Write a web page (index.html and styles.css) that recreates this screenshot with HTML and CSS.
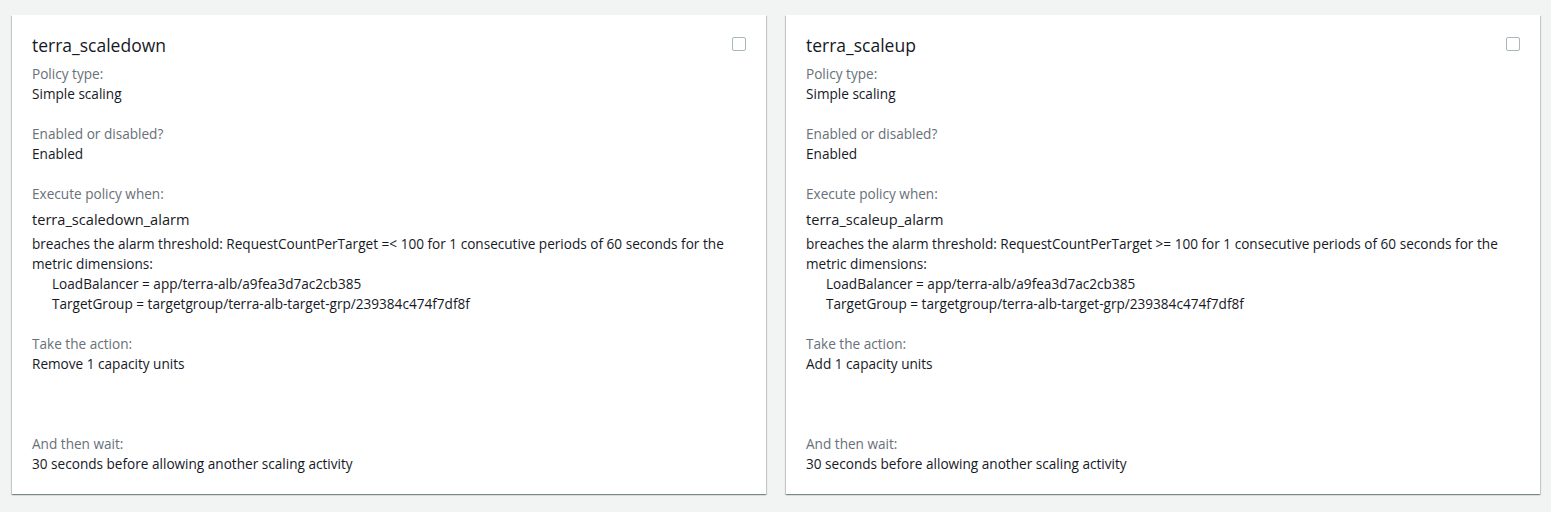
FILE: index.html
```html
<!DOCTYPE html>
<html>
<head>
<meta charset="utf-8">
<link rel="stylesheet" href="styles.css">
</head>
<body>
<div class="grid">
  <div class="card">
    <div class="card-head">
      <h2 class="title">terra_scaledown</h2>
      <span class="checkbox"></span>
    </div>
    <div class="field">
      <div class="label">Policy type:</div>
      <div class="value">Simple scaling</div>
    </div>
    <div class="field">
      <div class="label">Enabled or disabled?</div>
      <div class="value">Enabled</div>
    </div>
    <div class="field">
      <div class="label">Execute policy when:</div>
      <div class="alarm">terra_scaledown_alarm</div>
      <div class="value">breaches the alarm threshold: RequestCountPerTarget =&lt; 100 for 1 consecutive periods of 60 seconds for the metric dimensions:</div>
      <div class="value dim">LoadBalancer = app/terra-alb/a9fea3d7ac2cb385</div>
      <div class="value dim">TargetGroup = targetgroup/terra-alb-target-grp/239384c474f7df8f</div>
    </div>
    <div class="field">
      <div class="label">Take the action:</div>
      <div class="value">Remove 1 capacity units</div>
    </div>
    <div class="field last">
      <div class="label">And then wait:</div>
      <div class="value">30 seconds before allowing another scaling activity</div>
    </div>
  </div>
  <div class="card">
    <div class="card-head">
      <h2 class="title">terra_scaleup</h2>
      <span class="checkbox"></span>
    </div>
    <div class="field">
      <div class="label">Policy type:</div>
      <div class="value">Simple scaling</div>
    </div>
    <div class="field">
      <div class="label">Enabled or disabled?</div>
      <div class="value">Enabled</div>
    </div>
    <div class="field">
      <div class="label">Execute policy when:</div>
      <div class="alarm">terra_scaleup_alarm</div>
      <div class="value">breaches the alarm threshold: RequestCountPerTarget &gt;= 100 for 1 consecutive periods of 60 seconds for the metric dimensions:</div>
      <div class="value dim">LoadBalancer = app/terra-alb/a9fea3d7ac2cb385</div>
      <div class="value dim">TargetGroup = targetgroup/terra-alb-target-grp/239384c474f7df8f</div>
    </div>
    <div class="field">
      <div class="label">Take the action:</div>
      <div class="value">Add 1 capacity units</div>
    </div>
    <div class="field last">
      <div class="label">And then wait:</div>
      <div class="value">30 seconds before allowing another scaling activity</div>
    </div>
  </div>
</div>
</body>
</html>
```
FILE: styles.css
```css
html, body {
  margin: 0;
  padding: 0;
  background: #f2f3f3;
}
body {
  font-family: "Open Sans", "Noto Sans", sans-serif;
  color: #16191f;
  font-size: 13.6px;
  line-height: 20px;
}
.grid {
  display: grid;
  grid-template-columns: 1fr 1fr;
  gap: 20px;
  padding: 15px 11px 17px 12px;
}
.card {
  background: #fff;
  padding: 20px 20px 20px 20px;
  box-shadow: 0 1px 1px 0 rgba(0, 28, 36, 0.3), 1px 1px 1px 0 rgba(0, 28, 36, 0.15), -1px 1px 1px 0 rgba(0, 28, 36, 0.15);
  display: flex;
  flex-direction: column;
}
.card-head {
  display: flex;
  justify-content: space-between;
  align-items: flex-start;
  margin-bottom: 9px;
}
.title {
  margin: 0;
  font-size: 17.5px;
  font-weight: 400;
  line-height: 20px;
}
.checkbox {
  width: 12px;
  height: 12px;
  border: 1px solid #aab7b8;
  border-radius: 2px;
  margin-top: 2px;
  margin-right: 0;
}
.field {
  margin-bottom: 20px;
}
.field.last {
  margin-top: 40px;
  margin-bottom: 0;
}
.label {
  color: #687078;
}
.value {
  color: #16191f;
}
.alarm {
  font-size: 14.6px;
  line-height: 20px;
  margin: 5px 0 5px;
}
.dim {
  padding-left: 20px;
}
```
